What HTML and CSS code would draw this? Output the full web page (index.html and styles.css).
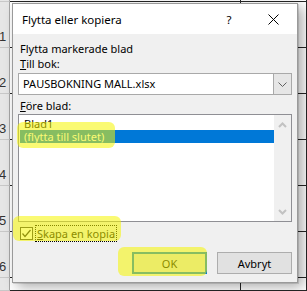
FILE: index.html
```html
<!DOCTYPE html>
<html lang="sv">
<head>
<meta charset="utf-8">
<title>Flytta eller kopiera</title>
<link rel="stylesheet" href="styles.css">
</head>
<body>
<div class="sheet">
  <div class="row"><div class="rh"></div><div class="cell"></div><div class="cell"></div></div>
  <div class="row"><div class="rh">1</div><div class="cell"></div><div class="cell"></div></div>
  <div class="row"><div class="rh">2</div><div class="cell"></div><div class="cell"></div></div>
  <div class="row"><div class="rh">3</div><div class="cell"></div><div class="cell"></div></div>
  <div class="row"><div class="rh">4</div><div class="cell"></div><div class="cell"></div></div>
  <div class="row"><div class="rh">5</div><div class="cell"></div><div class="cell"></div></div>
  <div class="row"><div class="rh">6</div><div class="cell"></div><div class="cell"></div></div>
  <div class="row last"><div class="rh"></div><div class="cell"></div><div class="cell"></div></div>
</div>

<div class="dialog">
  <div class="titlebar">
    <span class="title">Flytta eller kopiera</span>
    <span class="help">?</span>
    <span class="close">
      <svg width="11" height="11" viewBox="0 0 11 11"><path d="M0.5 0.5 L10.5 10.5 M10.5 0.5 L0.5 10.5" stroke="#000" stroke-width="1" fill="none"/></svg>
    </span>
  </div>
  <div class="body">
    <div class="label first">Flytta markerade blad</div>
    <div class="label"><u>T</u>ill bok:</div>
    <div class="combo">
      <span class="combo-text">PAUSBOKNING MALL.xlsx</span>
      <span class="combo-btn">
        <svg width="9" height="5" viewBox="0 0 9 5"><path d="M0.5 0.5 L4.5 4.5 L8.5 0.5" stroke="#606060" stroke-width="1" fill="none"/></svg>
      </span>
    </div>
    <div class="label second"><u>F</u>öre blad:</div>
    <div class="listbox">
      <div class="items">
        <div class="item">Blad1</div>
        <div class="item selected">(flytta till slutet)</div>
      </div>
      <div class="scroll">
        <svg width="9" height="6" viewBox="0 0 9 6"><path d="M1 5 L4.5 1.5 L8 5" stroke="#c2c2c2" stroke-width="2" fill="none"/></svg>
        <svg width="9" height="6" viewBox="0 0 9 6"><path d="M1 1 L4.5 4.5 L8 1" stroke="#c2c2c2" stroke-width="2" fill="none"/></svg>
      </div>
    </div>
    <div class="checkrow">
      <span class="checkbox">
        <svg width="11" height="11" viewBox="0 0 11 11"><path d="M1.5 5.5 L4 8.5 L9.5 2" stroke="#1a1a1a" stroke-width="1.2" fill="none"/></svg>
      </span>
      <span class="checklabel"><u>S</u>kapa en kopia</span>
    </div>
    <div class="buttons">
      <button class="btn default">OK</button>
      <button class="btn">Avbryt</button>
    </div>
  </div>
  <div class="hl hl-list"></div>
  <div class="hl hl-check"></div>
  <div class="hl hl-ok"></div>
</div>
</body>
</html>
```

FILE: styles.css
```css
html, body {
  margin: 0;
  padding: 0;
}
body {
  width: 307px;
  height: 291px;
  overflow: hidden;
  background: #fff;
  position: relative;
  font-family: "Noto Sans", "Open Sans", sans-serif;
  font-size: 11px;
  color: #000;
}

/* spreadsheet background */
.sheet {
  margin-top: -44px;
  height: 335px;
  overflow: hidden;
}
.row {
  display: grid;
  grid-template-columns: 10px 231px 1fr;
  height: 46px;
}
.row.last {
  height: 13px;
}
.rh {
  background: #e6e6e6;
  border-right: 1px solid #a6a6a6;
  border-bottom: 1px solid #c8c8c8;
  box-sizing: border-box;
  font-family: "Liberation Sans", sans-serif;
  font-size: 13px;
  line-height: 13px;
  color: #333;
  display: flex;
  align-items: flex-end;
  justify-content: center;
  padding-right: 4px;
  padding-bottom: 4px;
  overflow: hidden;
}
.cell {
  border-bottom: 1px solid #262626;
  border-right: 1px solid #262626;
  box-sizing: border-box;
}

/* dialog */
.dialog {
  position: absolute;
  left: 12px;
  top: 3px;
  width: 286px;
  height: 280px;
  box-sizing: border-box;
  border: 1px solid #9a9a9a;
  background: #f0f0f0;
  box-shadow: 1px 1px 0 rgba(0, 0, 0, 0.12), 5px 4px 12px rgba(0, 0, 0, 0.32);
  display: flex;
  flex-direction: column;
}
.titlebar {
  height: 30px;
  flex: none;
  background: #fff;
  display: flex;
  align-items: center;
  padding-left: 9px;
  font-size: 11.5px;
}
.title {
  flex: 1;
}
.help {
  width: 10px;
  text-align: center;
  margin-right: 34px;
}
.close {
  display: flex;
  margin-right: 18px;
}
.body {
  padding: 0 5px;
  display: flex;
  flex-direction: column;
}
.label {
  height: 15px;
  line-height: 15px;
  padding-left: 2px;
}
.label.first {
  margin-top: 7px;
}
.combo {
  margin-top: 2px;
  height: 22px;
  box-sizing: border-box;
  border: 1px solid #a9a9a9;
  background: #fff;
  display: flex;
  align-items: stretch;
}
.combo-text {
  flex: 1;
  padding-left: 4px;
  line-height: 20px;
}
.combo-btn {
  width: 17px;
  background: #e6e6e6;
  border-left: 1px solid #a9a9a9;
  display: flex;
  align-items: center;
  justify-content: center;
}
.label.second {
  margin-top: 3px;
}
.listbox {
  margin-top: 1px;
  height: 108px;
  box-sizing: border-box;
  border: 1px solid #8f8f94;
  background: #fff;
  display: flex;
}
.items {
  flex: 1;
  padding-top: 2px;
  padding-left: 1px;
}
.item {
  height: 13px;
  line-height: 13px;
  padding-left: 4px;
  overflow: hidden;
}
.item.selected {
  background: #0078d7;
  color: #fff;
}
.scroll {
  width: 17px;
  background: #f0f0f0;
  display: flex;
  flex-direction: column;
  justify-content: space-between;
  align-items: center;
  padding: 7px 0 6px;
}
.checkrow {
  margin-top: 3px;
  display: flex;
  align-items: center;
  height: 17px;
  padding-left: 2px;
}
.checkbox {
  width: 13px;
  height: 13px;
  box-sizing: border-box;
  border: 1px solid #333;
  background: #fff;
  display: flex;
  align-items: center;
  justify-content: center;
}
.checklabel {
  margin-left: 3px;
  padding: 0 1px;
  line-height: 15px;
  outline: 1px dotted #000;
}
.buttons {
  margin-top: 10px;
  display: flex;
  justify-content: flex-end;
  gap: 10px;
}
.btn {
  width: 75px;
  height: 22px;
  font: inherit;
  color: #000;
  background: #e1e1e1;
  border: 1px solid #adadad;
  padding: 0;
}
.btn.default {
  border: 2px solid #0078d7;
}

/* yellow highlighter marks */
.hl {
  position: absolute;
  background: rgba(245, 245, 0, 0.55);
  border-radius: 6px;
}
.hl-list {
  left: 4px;
  top: 118px;
  width: 98px;
  height: 26px;
}
.hl-check {
  left: 0;
  top: 212px;
  width: 108px;
  height: 25px;
}
.hl-ok {
  left: 105px;
  top: 243px;
  width: 89px;
  height: 29px;
}
```
